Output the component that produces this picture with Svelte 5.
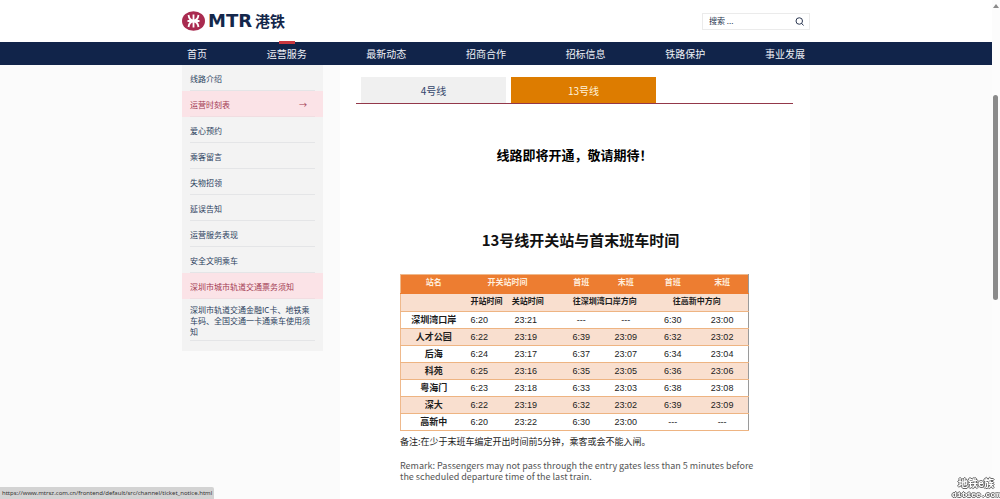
<script>
  const nav = ['首页', '运营服务', '最新动态', '招商合作', '招标信息', '铁路保护', '事业发展'];
  const menu = [
    '线路介绍', '运营时刻表', '爱心预约', '乘客留言', '失物招领', '延误告知',
    '运营服务表现', '安全文明乘车', '深圳市城市轨道交通票务须知'
  ];
  const rows = [
    ['深圳湾口岸', '6:20', '23:21', '---', '---', '6:30', '23:00'],
    ['人才公园', '6:22', '23:19', '6:39', '23:09', '6:32', '23:02'],
    ['后海', '6:24', '23:17', '6:37', '23:07', '6:34', '23:04'],
    ['科苑', '6:25', '23:16', '6:35', '23:05', '6:36', '23:06'],
    ['粤海门', '6:23', '23:18', '6:33', '23:03', '6:38', '23:08'],
    ['深大', '6:22', '23:19', '6:32', '23:02', '6:39', '23:09'],
    ['高新中', '6:20', '23:22', '6:30', '23:00', '---', '---']
  ];
  let tab = $state(1);
</script>

<div class="window">
  <div class="page">
    <header class="wrap top">
      <a class="logo" href="#home" aria-label="MTR 港铁">
        <svg viewBox="0 0 46 40" width="23" height="20" aria-hidden="true">
          <ellipse cx="23" cy="20" rx="23" ry="19.5" fill="#a92b50" />
          <g fill="none" stroke="#fff" stroke-width="3.6">
            <path d="M23 7V33M11 20H35" />
            <path d="M13 8C14 15 18 19 23 19S32 15 33 8" />
            <path d="M13 32C14 25 18 21 23 21S32 25 33 32" />
          </g>
        </svg>
        <span class="latin">MTR</span><span class="han">港铁</span>
      </a>
      <form class="search" onsubmit={(e) => e.preventDefault()}>
        <input type="text" placeholder="搜索 ..." aria-label="搜索" />
        <button type="submit" aria-label="搜索">
          <svg viewBox="0 0 18 18" width="9" height="9" fill="none" stroke="#2c3852" stroke-width="2">
            <circle cx="8.5" cy="8" r="6.5" /><path d="M13 12.5L17 17" />
          </svg>
        </button>
      </form>
    </header>

    <nav class="bar">
      <div class="wrap links">
        {#each nav as item, i}
          <a href="#nav" class:current={i === 1}>{item}</a>
        {/each}
      </div>
    </nav>

    <div class="wrap body">
      <aside>
        <ul>
          {#each menu as item, i}
            <li class:hot={i === 1 || i === 8}>
              <a href="#menu"><span>{item}</span>{#if i === 1}<span class="arrow">→</span>{/if}</a>
            </li>
          {/each}
          <li class="long"><a href="#menu">深圳市轨道交通金融IC卡、地铁乘车码、全国交通一卡通乘车使用须知</a></li>
        </ul>
      </aside>

      <main>
        <div class="tabs">
          <button class:on={tab === 0} onclick={() => (tab = 0)}>4号线</button>
          <button class:on={tab === 1} onclick={() => (tab = 1)}>13号线</button>
        </div>
        <h1>线路即将开通，敬请期待！</h1>
        <section>
          <h2>13号线开关站与首末班车时间</h2>
          <table>
            <colgroup>
              <col style="width:19%" /><col style="width:10.5%" /><col style="width:13%" />
              <col style="width:15.5%" /><col style="width:13.5%" /><col style="width:13.5%" />
              <col style="width:15%" />
            </colgroup>
            <thead>
              <tr class="head">
                <th>站名</th><th colspan="2">开关站时间</th>
                <th class="in">首班</th><th>末班</th><th>首班</th><th>末班</th>
              </tr>
              <tr class="sub">
                <th></th><th class="lead">开站时间</th><th class="close">关站时间</th>
                <th colspan="2" class="in">往深圳湾口岸方向</th><th colspan="2" class="out">往高新中方向</th>
              </tr>
            </thead>
            <tbody>
              {#each rows as row}
                <tr>
                  {#each row as cell, c}
                    {#if c === 0}<th scope="row">{cell}</th>
                    {:else}<td class:lead={c === 1} class:in={c === 3}>{cell}</td>{/if}
                  {/each}
                </tr>
              {/each}
            </tbody>
          </table>
          <p class="note">备注:在少于末班车编定开出时间前5分钟，乘客或会不能入闸。</p>
          <p class="remark">Remark: Passengers may not pass through the entry gates less than 5 minutes before the scheduled departure time of the last train.</p>
        </section>
      </main>
    </div>
  </div>

  <div class="scroll" aria-hidden="true"><i></i><b></b></div>
  <div class="status">https://www.mtrsz.com.cn/frontend/default/src/channel/ticket_notice.html</div>
  <div class="mark"><span>地铁e族</span><small>ditiee.com</small></div>
</div>

<style>
  :global(body) { margin: 0; }
  .window {
    display: flex;
    min-height: 100vh;
    background: #fff;
    color: #2c3f5e;
    font-family: "Noto Sans CJK SC", "Noto Sans", sans-serif;
    font-size: 8px;
  }
  .window * { box-sizing: border-box; }
  a { color: inherit; text-decoration: none; }
  .page {
    flex: 1; display: flex; flex-direction: column;
    background: linear-gradient(#fff 42px, #fbfbfb 42px);
  }
  .wrap { width: 100%; max-width: 628px; margin: 0 auto; }
  .top { display: flex; justify-content: space-between; align-items: center; height: 42px; }
  .logo { display: flex; align-items: center; color: #14274b; line-height: 20px; height: 20px; }
  .latin { margin-left: 3px; font: bold 18px/20px "DejaVu Sans", sans-serif; }
  .han { margin-left: 3px; font-size: 15px; font-weight: 700; }
  .search {
    display: flex; align-items: center; width: 108px; height: 17px;
    border: 1px solid #ebebeb; background: #fff;
  }
  .search input {
    flex: 1; min-width: 0; padding: 0 6px; border: 0; outline: 0; background: none;
    font: inherit; line-height: 14px; color: #26334d;
  }
  .search input::placeholder { color: #26334d; opacity: 1; }
  .search button { display: flex; padding: 0 5px; border: 0; background: none; }
  .bar { height: 23px; background: #11244a; }
  .links { display: flex; justify-content: space-between; padding: 0 5px; }
  .links a { position: relative; font-size: 10px; line-height: 23px; color: #eef1f6; }
  .current::before {
    content: ""; position: absolute; left: 50%; top: -1px; width: 16px; height: 3px;
    margin-left: -8px; background: #c9383f;
  }
  .body { flex: 1; display: flex; align-items: stretch; gap: 17px; }
  aside { flex: 0 0 141px; }
  ul { margin: 0; padding: 0 0 10px; list-style: none; background: #f3f3f3; }
  li { padding: 0 8px; }
  li a {
    display: flex; justify-content: space-between; align-items: center;
    height: 26px; padding-top: 2px; border-bottom: 1px solid #e4e5e7; line-height: 12px;
  }
  .hot { background: #fbe3e7; color: #a33b53; }
  .hot a { border-color: #f1dde1; }
  .hot .arrow { margin-right: 8px; font-size: 8px; }
  .long a { display: block; height: auto; padding: 5px 0 3px; line-height: 11px; }
  main { flex: 1; min-width: 0; padding: 12px 17px 0 16px; background: #fff; }
  .tabs { display: flex; gap: 5px; padding: 0 5px; border-bottom: 1px solid #93384a; }
  .tabs button {
    width: 145px; height: 26px; padding: 0; border: 0; background: #f0f0f0;
    color: #33456b; font: inherit; font-size: 10px;
  }
  .tabs .on { background: #dd7c00; color: #fff3dc; }
  h1 {
    margin: 41px 0 0; text-align: center; color: #000;
    font-size: 13px; line-height: 20px; font-weight: 700;
  }
  section { margin: 65px 44px 0; color: #1c1c1c; }
  h2 {
    margin: 0 0 24px; padding-left: 12px; text-align: center; white-space: nowrap; color: #111;
    font-size: 15px; line-height: 20px; font-weight: 700;
  }
  table {
    width: 100%; table-layout: fixed; border-collapse: collapse;
    border: 1px solid #efb98c; border-right-color: #9a9a9a;
  }
  th, td {
    height: 17px; padding: 0; text-align: center; white-space: nowrap; line-height: 14px;
    border-bottom: 1px solid #eeb482;
  }
  td { font-family: "Liberation Sans", sans-serif; font-size: 9px; }
  th { font-size: 8px; font-weight: 700; }
  tbody th { font-size: 9px; }
  .head th { background: #ed7d31; color: #ffeede; height: 18px; padding-bottom: 4px; border-color: #ed7d31; }
  .sub th { height: 18px; padding-bottom: 4px; line-height: 13px; }
  .sub, tbody tr:nth-child(even) { background: #f9dfcf; }
  th.lead, td.lead { padding-left: 4px; text-align: left; }
  th.in, td.in { padding-left: 12px; }
  th.close { padding-left: 4px; }
  th.out { padding-right: 4px; }
  p { margin: 0; }
  .note { margin-top: 4px; font-size: 9px; line-height: 14px; white-space: nowrap; }
  .remark {
    margin: 11px -12px 0 0; color: #555; font-size: 9px; line-height: 11px;
  }
  .scroll { flex: 0 0 8px; padding: 4px 1px; background: #fcfcfc; }
  .scroll i {
    display: block; width: 0; margin-bottom: 87px;
    border: 3px solid transparent; border-top: 0; border-bottom: 4px solid #8a8a8a;
  }
  .scroll b { display: block; width: 5px; height: 205px; border-radius: 3px; background: #8b8b8b; }
  .status {
    position: fixed; left: 0; bottom: 0; padding: 0 2px; border-radius: 0 2px 0 0;
    background: #d3d3d3; color: #333; font: 6px/12px "Noto Sans", sans-serif;
  }
  .mark {
    position: fixed; right: 0; bottom: 0; display: flex; flex-direction: column; align-items: center;
    color: #fff; font-size: 10px; line-height: 14px; font-weight: 700;
    text-shadow: 1px 0 #666, -1px 0 #666, 0 1px #666, 0 -1px #666;
  }
  .mark small { font: bold 8px/9px "Liberation Mono", monospace; }
</style>
